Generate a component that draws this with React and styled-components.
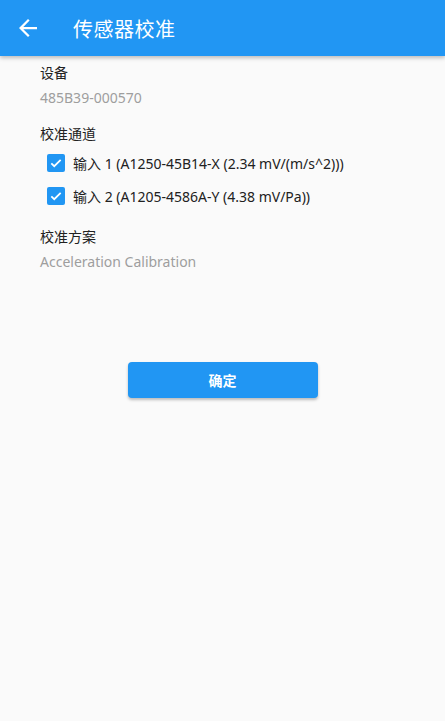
import React, {useState} from "react";
import styled, {createGlobalStyle} from "styled-components";

const GlobalStyle = createGlobalStyle`
  html, body {
    margin: 0;
    padding: 0;
    background: #fafafa;
    font-family: "Noto Sans", "Noto Sans CJK SC", sans-serif;
  }
`;

const Page = styled.div`
  min-height: 721px;
  background: #fafafa;
`;

const AppBar = styled.header`
  height: 56px;
  background: #2196f3;
  display: flex;
  align-items: center;
  box-shadow: 0 2px 4px rgba(0, 0, 0, 0.25);
  color: #fff;
`;

const BackButton = styled.div`
  width: 56px;
  height: 56px;
  display: flex;
  align-items: center;
  justify-content: center;
`;

const Title = styled.h1`
  margin: 0 0 0 17px;
  font-size: 20px;
  font-weight: 400;
  letter-spacing: 0.5px;
`;

const Content = styled.div`
  padding: 5px 40px 0;
`;

const Section = styled.div`
  margin-top: ${p => p.$top}px;
`;

const Label = styled.div`
  font-size: 14px;
  line-height: 24px;
  color: #212121;
`;

const Value = styled.div`
  font-size: 14px;
  line-height: 24px;
  margin-top: 1px;
  color: #9e9e9e;
`;

const CheckRow = styled.label`
  display: flex;
  align-items: center;
  height: 33px;
  padding-left: 7px;
  font-size: 14px;
  color: #212121;
  cursor: pointer;
`;

const Box = styled.span`
  width: 18px;
  height: 18px;
  border-radius: 2px;
  background: ${p => (p.$checked ? "#2196f3" : "transparent")};
  border: ${p => (p.$checked ? "none" : "2px solid #757575")};
  box-sizing: border-box;
  display: flex;
  align-items: center;
  justify-content: center;
  margin-right: 8px;
`;

const ButtonWrap = styled.div`
  display: flex;
  justify-content: center;
  margin-top: 88px;
`;

const Confirm = styled.button`
  width: 190px;
  height: 36px;
  border: none;
  border-radius: 4px;
  background: #2196f3;
  color: #fff;
  font-family: inherit;
  font-size: 14px;
  font-weight: 700;
  box-shadow: 0 2px 3px rgba(0, 0, 0, 0.25);
  cursor: pointer;
`;

const channels = [
  "输入 1 (A1250-45B14-X (2.34 mV/(m/s^2)))",
  "输入 2 (A1205-4586A-Y (4.38 mV/Pa))",
];

export default function App() {
  const [checked, setChecked] = useState([true, true]);

  const toggle = i => {
    setChecked(checked.map((c, j) => (j === i ? !c : c)));
  };

  return (
    <Page>
      <GlobalStyle />
      <AppBar>
        <BackButton>
          <svg width="18" height="18" viewBox="0 0 16 16">
            <path d="M16 7H3.83l5.59-5.59L8 0 0 8l8 8 1.41-1.41L3.83 9H16z" fill="#fff" />
          </svg>
        </BackButton>
        <Title>传感器校准</Title>
      </AppBar>
      <Content>
        <Section $top={0}>
          <Label>设备</Label>
          <Value>485B39-000570</Value>
        </Section>
        <Section $top={12}>
          <Label>校准通道</Label>
          {channels.map((c, i) => (
            <CheckRow key={c} onClick={() => toggle(i)}>
              <Box $checked={checked[i]}>
                {checked[i] && (
                  <svg width="14" height="14" viewBox="0 0 24 24">
                    <path d="M4 12.5l5 5L20 6.5" fill="none" stroke="#fff" strokeWidth="3" />
                  </svg>
                )}
              </Box>
              {c}
            </CheckRow>
          ))}
        </Section>
        <Section $top={13}>
          <Label>校准方案</Label>
          <Value>Acceleration Calibration</Value>
        </Section>
      </Content>
      <ButtonWrap>
        <Confirm>确定</Confirm>
      </ButtonWrap>
    </Page>
  );
}
